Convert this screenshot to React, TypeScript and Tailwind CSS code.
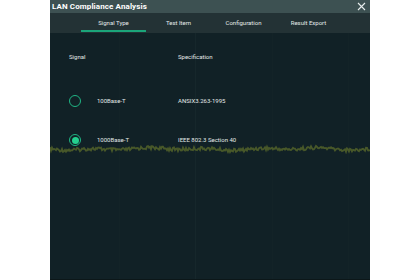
import React from "react";

function noisePoints(): string {
  const pts: string[] = [];
  for (let i = 0; i <= 320; i += 1) {
    const r =
      Math.sin(i * 12.9898) * 43758.5453 - Math.floor(Math.sin(i * 12.9898) * 43758.5453);
    const slow = Math.sin(i / 9) * 0.8 + Math.sin(i / 23) * 0.6;
    const y = 5 + slow + (r - 0.5) * 3.6;
    pts.push(`${i},${y.toFixed(2)}`);
  }
  return pts.join(" ");
}

function Radio({ checked }: { checked: boolean }) {
  return (
    <div className="w-[12px] h-[12px] rounded-full border border-[#1fb584] flex items-center justify-center">
      {checked && <div className="w-[7px] h-[7px] rounded-full bg-[#25d08f]" />}
    </div>
  );
}

export default function App() {
  const tabs = ["Signal Type", "Test Item", "Configuration", "Result Export"];
  const noise = noisePoints();
  return (
    <div
      className="w-[420px] h-[280px] bg-white pl-[50px]"
      style={{ fontFamily: "Roboto, 'Liberation Sans', sans-serif" }}
    >
      <div className="w-[320px] h-[280px] flex flex-col bg-[#112126]">
        <div className="h-[13px] bg-[#3d5152] flex items-center justify-between pl-[2px] pr-[4px]">
          <span className="text-[8px] font-bold text-white leading-none tracking-[0.1px]">
            LAN Compliance Analysis
          </span>
          <svg width="9" height="9" viewBox="0 0 9 9">
            <path d="M1 1 L8 8 M8 1 L1 8" stroke="#e8eeee" strokeWidth="1.1" />
          </svg>
        </div>
        <div className="h-[20px] bg-[#233235] flex pl-[31px]">
          {tabs.map((t, i) => (
            <div key={t} className="w-[65px] h-full flex flex-col items-center">
              <div className="flex-1 flex items-center text-[6px] text-[#e3eaea] leading-none pt-[3px]">
                {t}
              </div>
              <div className={i === 0 ? "h-[2px] w-full bg-[#1ba57a] mb-[1px]" : "h-[2px] mb-[1px]"} />
            </div>
          ))}
        </div>
        <div className="relative flex-1 flex flex-col">
          <svg className="absolute inset-0" width="320" height="247">
            {[69, 145, 222, 298].map((x) => (
              <line key={x} x1={x + 0.5} y1="0" x2={x + 0.5} y2="247" stroke={x === 145 ? "#16272b" : "#132327"} strokeWidth="1" />
            ))}
            <line x1="0" y1="246.5" x2="320" y2="246.5" stroke="#0c1719" />
          </svg>
          <div className="absolute left-0 top-[111px]">
            <svg width="320" height="10">
              <polyline points={noise} fill="none" stroke="#56662b" strokeWidth="1.8" opacity="0.8" />
            </svg>
          </div>
          <div className="relative flex flex-col pl-[19px] text-[6px] text-[#e3e9e9] leading-none">
            <div className="flex h-[10px] items-center mt-[19px]">
              <span className="w-[109px]">Signal</span>
              <span>Specification</span>
            </div>
            <div className="flex h-[14px] items-center mt-[32px]">
              <div className="w-[28px]">
                <Radio checked={false} />
              </div>
              <span className="w-[81px]">100Base-T</span>
              <span>ANSIX3.263-1995</span>
            </div>
            <div className="flex h-[14px] items-center mt-[25px]">
              <div className="w-[28px]">
                <Radio checked={true} />
              </div>
              <span className="w-[81px]">1000Base-T</span>
              <span>IEEE 802.3 Section 40</span>
            </div>
          </div>
        </div>
      </div>
    </div>
  );
}
